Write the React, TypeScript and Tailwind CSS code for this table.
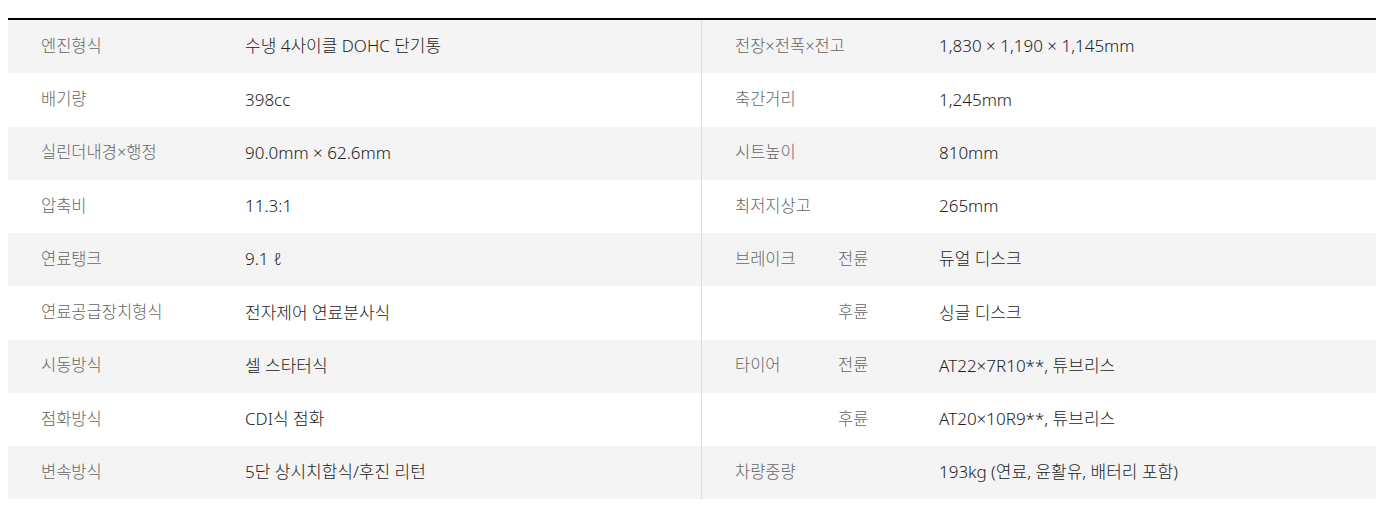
const left = [
  ["엔진형식", "수냉 4사이클 DOHC 단기통"],
  ["배기량", "398cc"],
  ["실린더내경×행정", "90.0mm × 62.6mm"],
  ["압축비", "11.3:1"],
  ["연료탱크", "9.1 ℓ"],
  ["연료공급장치형식", "전자제어 연료분사식"],
  ["시동방식", "셀 스타터식"],
  ["점화방식", "CDI식 점화"],
  ["변속방식", "5단 상시치합식/후진 리턴"],
];

const right = [
  ["전장×전폭×전고", "", "1,830 × 1,190 × 1,145mm"],
  ["축간거리", "", "1,245mm"],
  ["시트높이", "", "810mm"],
  ["최저지상고", "", "265mm"],
  ["브레이크", "전륜", "듀얼 디스크"],
  ["", "후륜", "싱글 디스크"],
  ["타이어", "전륜", "AT22×7R10**, 튜브리스"],
  ["", "후륜", "AT20×10R9**, 튜브리스"],
  ["차량중량", "", "193kg (연료, 윤활유, 배터리 포함)"],
];

export default function App() {
  return (
    <div className="w-[1376px] h-[510px] overflow-hidden bg-white pt-[18px] pl-2 font-['Noto_Sans','Noto_Sans_CJK_KR',sans-serif] font-light">
      <div className="w-[1388px] border-t-2 border-black flex">
        <div className="w-[694px] border-r border-[#dddddd]">
          {left.map(([label, value], i) => (
            <div
              key={label}
              className={`flex items-center h-[53.25px] pb-px ${i % 2 === 0 ? "bg-[#f4f4f4]" : "bg-white"}`}
            >
              <div className="w-[204px] shrink-0 pl-[33px] text-[16.5px] text-[#666666] whitespace-nowrap">{label}</div>
              <div className="pl-[33px] text-[17px] text-[#222222] whitespace-nowrap">{value}</div>
            </div>
          ))}
        </div>
        <div className="flex-1">
          {right.map(([label, sub, value], i) => (
            <div
              key={i}
              className={`flex items-center h-[53.25px] pb-px ${i % 2 === 0 ? "bg-[#f4f4f4]" : "bg-white"}`}
            >
              <div className="w-[204px] shrink-0 pl-[33px] flex text-[16.5px] text-[#666666] whitespace-nowrap">
                <span className="w-[103px] shrink-0">{label}</span>
                <span>{sub}</span>
              </div>
              <div className="pl-[33px] text-[17px] text-[#222222] whitespace-nowrap">{value}</div>
            </div>
          ))}
        </div>
      </div>
    </div>
  );
}
